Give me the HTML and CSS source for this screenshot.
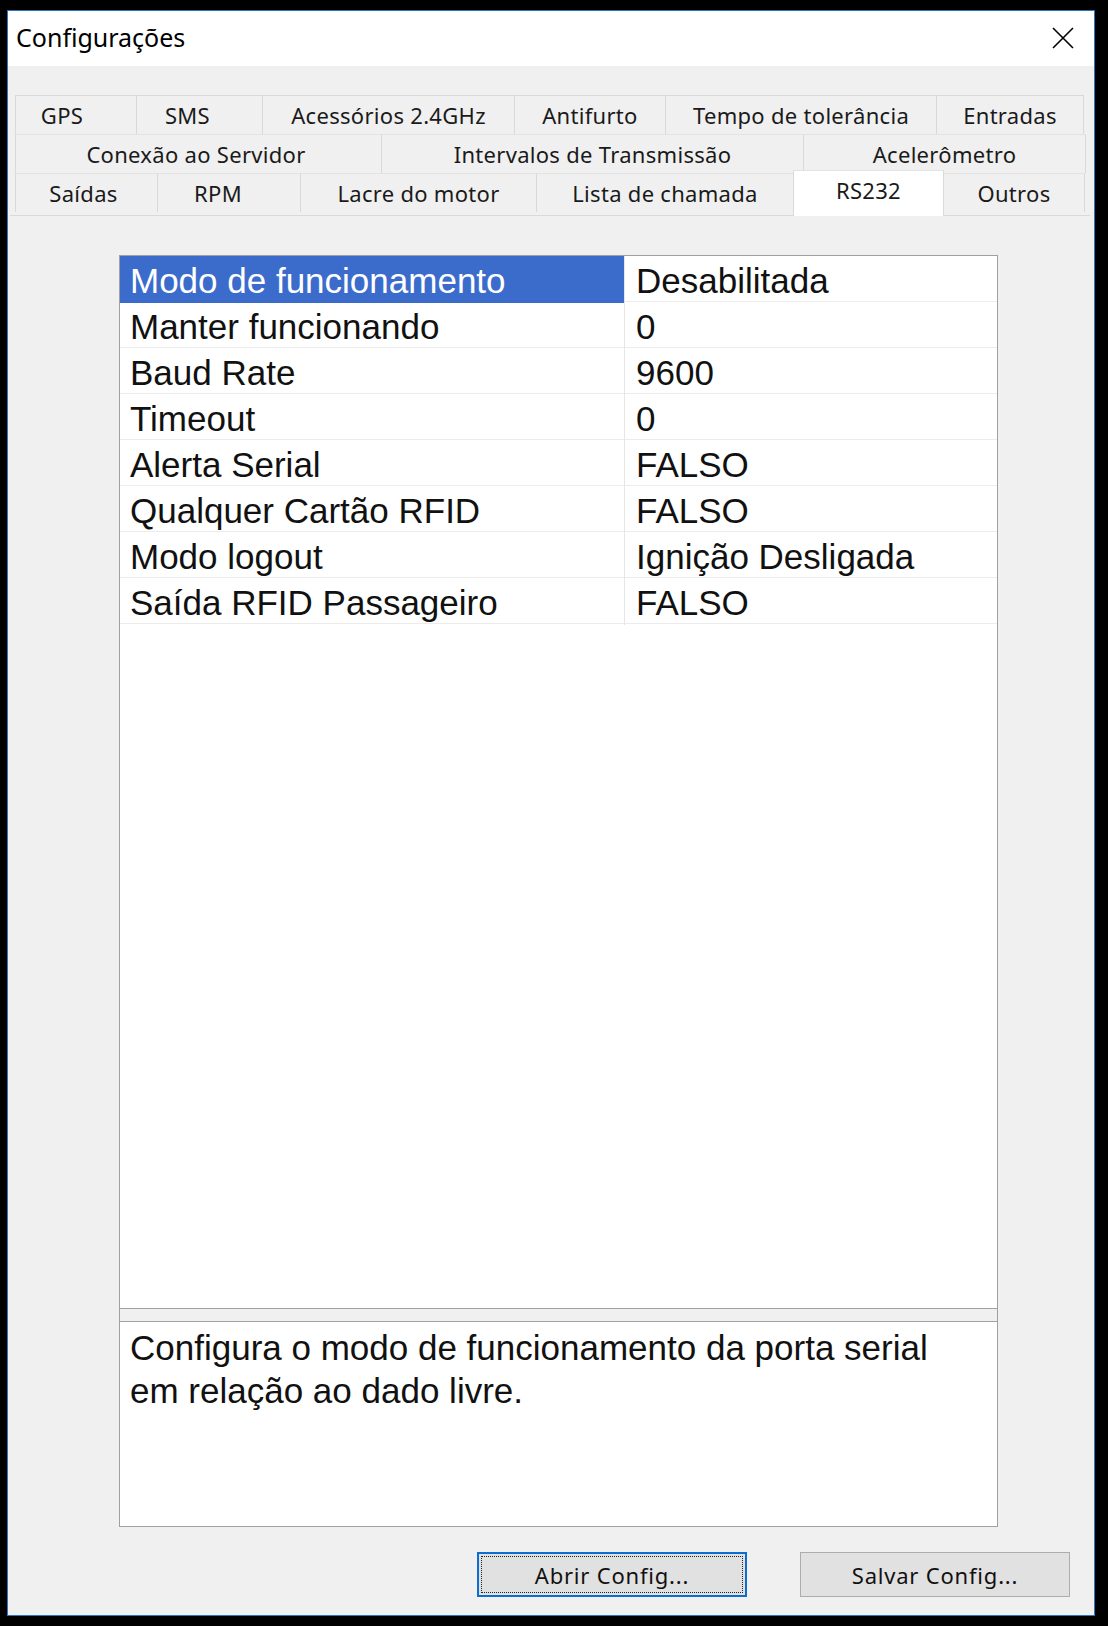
FILE: index.html
```html
<!DOCTYPE html>
<html lang="pt">
<head>
	<meta charset="utf-8">
	<title>Configurações</title>
	<link rel="stylesheet" href="styles.css">
</head>
<body>
	<div class="window">
		<div class="titlebar">
			<span class="title">Configurações</span>
			<svg class="close" width="22" height="22" viewBox="0 0 22 22">
				<path d="M1 1 L21 21 M21 1 L1 21" stroke="#000" stroke-width="1.6" fill="none"/>
			</svg>
		</div>

		<div class="tabs">
			<div class="tab-row">
				<div class="tab t-gps">GPS</div>
				<div class="tab t-sms">SMS</div>
				<div class="tab t-acc">Acessórios 2.4GHz</div>
				<div class="tab t-anti">Antifurto</div>
				<div class="tab t-tempo">Tempo de tolerância</div>
				<div class="tab t-entr">Entradas</div>
			</div>
			<div class="tab-row">
				<div class="tab t-conex">Conexão ao Servidor</div>
				<div class="tab t-interv">Intervalos de Transmissão</div>
				<div class="tab t-acel">Acelerômetro</div>
			</div>
			<div class="tab-row">
				<div class="tab t-said">Saídas</div>
				<div class="tab t-rpm">RPM</div>
				<div class="tab t-lacre">Lacre do motor</div>
				<div class="tab t-lista">Lista de chamada</div>
				<div class="tab t-rs selected">RS232</div>
				<div class="tab t-outros">Outros</div>
			</div>
		</div>

		<div class="page">
			<div class="propgrid">
				<div class="rows">
					<div class="row active">
						<span class="label">Modo de funcionamento</span>
						<span class="value">Desabilitada</span>
					</div>
					<div class="row">
						<span class="label">Manter funcionando</span>
						<span class="value">0</span>
					</div>
					<div class="row">
						<span class="label">Baud Rate</span>
						<span class="value">9600</span>
					</div>
					<div class="row">
						<span class="label">Timeout</span>
						<span class="value">0</span>
					</div>
					<div class="row">
						<span class="label">Alerta Serial</span>
						<span class="value">FALSO</span>
					</div>
					<div class="row">
						<span class="label">Qualquer Cartão RFID</span>
						<span class="value">FALSO</span>
					</div>
					<div class="row">
						<span class="label">Modo logout</span>
						<span class="value">Ignição Desligada</span>
					</div>
					<div class="row">
						<span class="label">Saída RFID Passageiro</span>
						<span class="value">FALSO</span>
					</div>
				</div>
				<div class="splitter"></div>
				<div class="help">Configura o modo de funcionamento da porta serial<br>em relação ao dado livre.</div>
			</div>

			<div class="actions">
				<button class="btn focused"><span>Abrir Config...</span></button>
				<button class="btn">Salvar Config...</button>
			</div>
		</div>
	</div>
</body>
</html>
```

FILE: styles.css
```css
body {
	margin: 0;
	padding: 10px 13px 10px 7px;
	background: #000;
	font-family: "Noto Sans", "Open Sans", sans-serif;
}

.window {
	width: 1088px;
	height: 1606px;
	box-sizing: border-box;
	border: 1px solid #2d74c4;
	background: #f0f0f0;
	display: flex;
	flex-direction: column;
}

.titlebar {
	height: 55px;
	background: #fff;
	display: flex;
	align-items: center;
	justify-content: space-between;
	padding: 0 20px 0 8px;
}

.title {
	font-size: 25px;
	color: #000;
	margin-top: -4px;
}

.close {
	margin-top: -1px;
}

/* tabs */
.tabs {
	margin-top: 29px;
	padding-left: 7px;
	display: flex;
	flex-direction: column;
}

.tab-row {
	display: flex;
	height: 39px;
}

.tab {
	box-sizing: border-box;
	height: 100%;
	border: 1px solid #d9d9d9;
	border-bottom: none;
	margin-right: -1px;
	background: #f0f0f0;
	display: flex;
	align-items: center;
	justify-content: center;
	font-size: 22px;
	letter-spacing: 0.3px;
	color: #1a1a1a;
	white-space: nowrap;
}

.tab-row + .tab-row .tab {
	border-top-color: #e3e3e3;
}

.tab.selected {
	position: relative;
	z-index: 2;
	background: #fff;
	height: 46px;
	margin-top: -3px;
	padding-bottom: 8px;
	border-top-color: #d9d9d9;
}

.t-gps { width: 122px; padding-right: 28px; }
.t-sms { width: 127px; padding-right: 24px; }
.t-acc { width: 253px; }
.t-anti { width: 152px; }
.t-tempo { width: 272px; }
.t-entr { width: 148px; }

.t-conex { width: 367px; padding-right: 5px; }
.t-interv { width: 423px; }
.t-acel { width: 283px; }

.t-said { width: 143px; padding-right: 6px; }
.t-rpm { width: 144px; padding-right: 22px; }
.t-lacre { width: 237px; }
.t-lista { width: 258px; }
.t-rs { width: 151px; }
.t-outros { width: 142px; }

/* tab page */
.page {
	margin: 3px 4px 0 2px;
	border-top: 1px solid #d9d9d9;
	flex: 1;
	display: flex;
	flex-direction: column;
	padding: 39px 0 0 109px;
}

.propgrid {
	width: 879px;
	height: 1272px;
	box-sizing: border-box;
	border: 1px solid #a0a0a0;
	background: #fff;
	display: flex;
	flex-direction: column;
	font-family: "Liberation Sans", Arial, sans-serif;
	font-size: 35px;
	color: #111;
}

.rows {
	flex: 1;
}

.row {
	display: grid;
	grid-template-columns: 504px 1fr;
	height: 46px;
	box-sizing: border-box;
	border-bottom: 1px solid #ececec;
	line-height: 44px;
}

.label {
	padding: 3px 0 0 10px;
	white-space: nowrap;
}

.value {
	padding: 3px 0 0 11px;
	border-left: 1px solid #e6e6e6;
	white-space: nowrap;
}

.row.active .label {
	background: #3c6ccb;
	color: #fff;
}

.splitter {
	height: 12px;
	background: #f0f0f0;
	border-top: 1px solid #a0a0a0;
	border-bottom: 1px solid #a0a0a0;
}

.help {
	height: 204px;
	box-sizing: border-box;
	padding: 4px 0 0 10px;
	line-height: 43px;
}

/* buttons */
.actions {
	display: flex;
	justify-content: flex-end;
	gap: 53px;
	margin-top: 25px;
	padding-right: 20px;
}

.btn {
	width: 270px;
	height: 45px;
	box-sizing: border-box;
	background: #e1e1e1;
	border: 1px solid #adadad;
	font-family: "Noto Sans", "Open Sans", sans-serif;
	font-size: 22px;
	letter-spacing: 0.8px;
	color: #111;
	padding: 0;
}

.btn.focused {
	border: 2px solid #0a6fd0;
	padding: 2px;
}

.btn.focused span {
	display: flex;
	align-items: center;
	justify-content: center;
	height: 100%;
	border: 1px dotted #222;
	box-sizing: border-box;
}
```
